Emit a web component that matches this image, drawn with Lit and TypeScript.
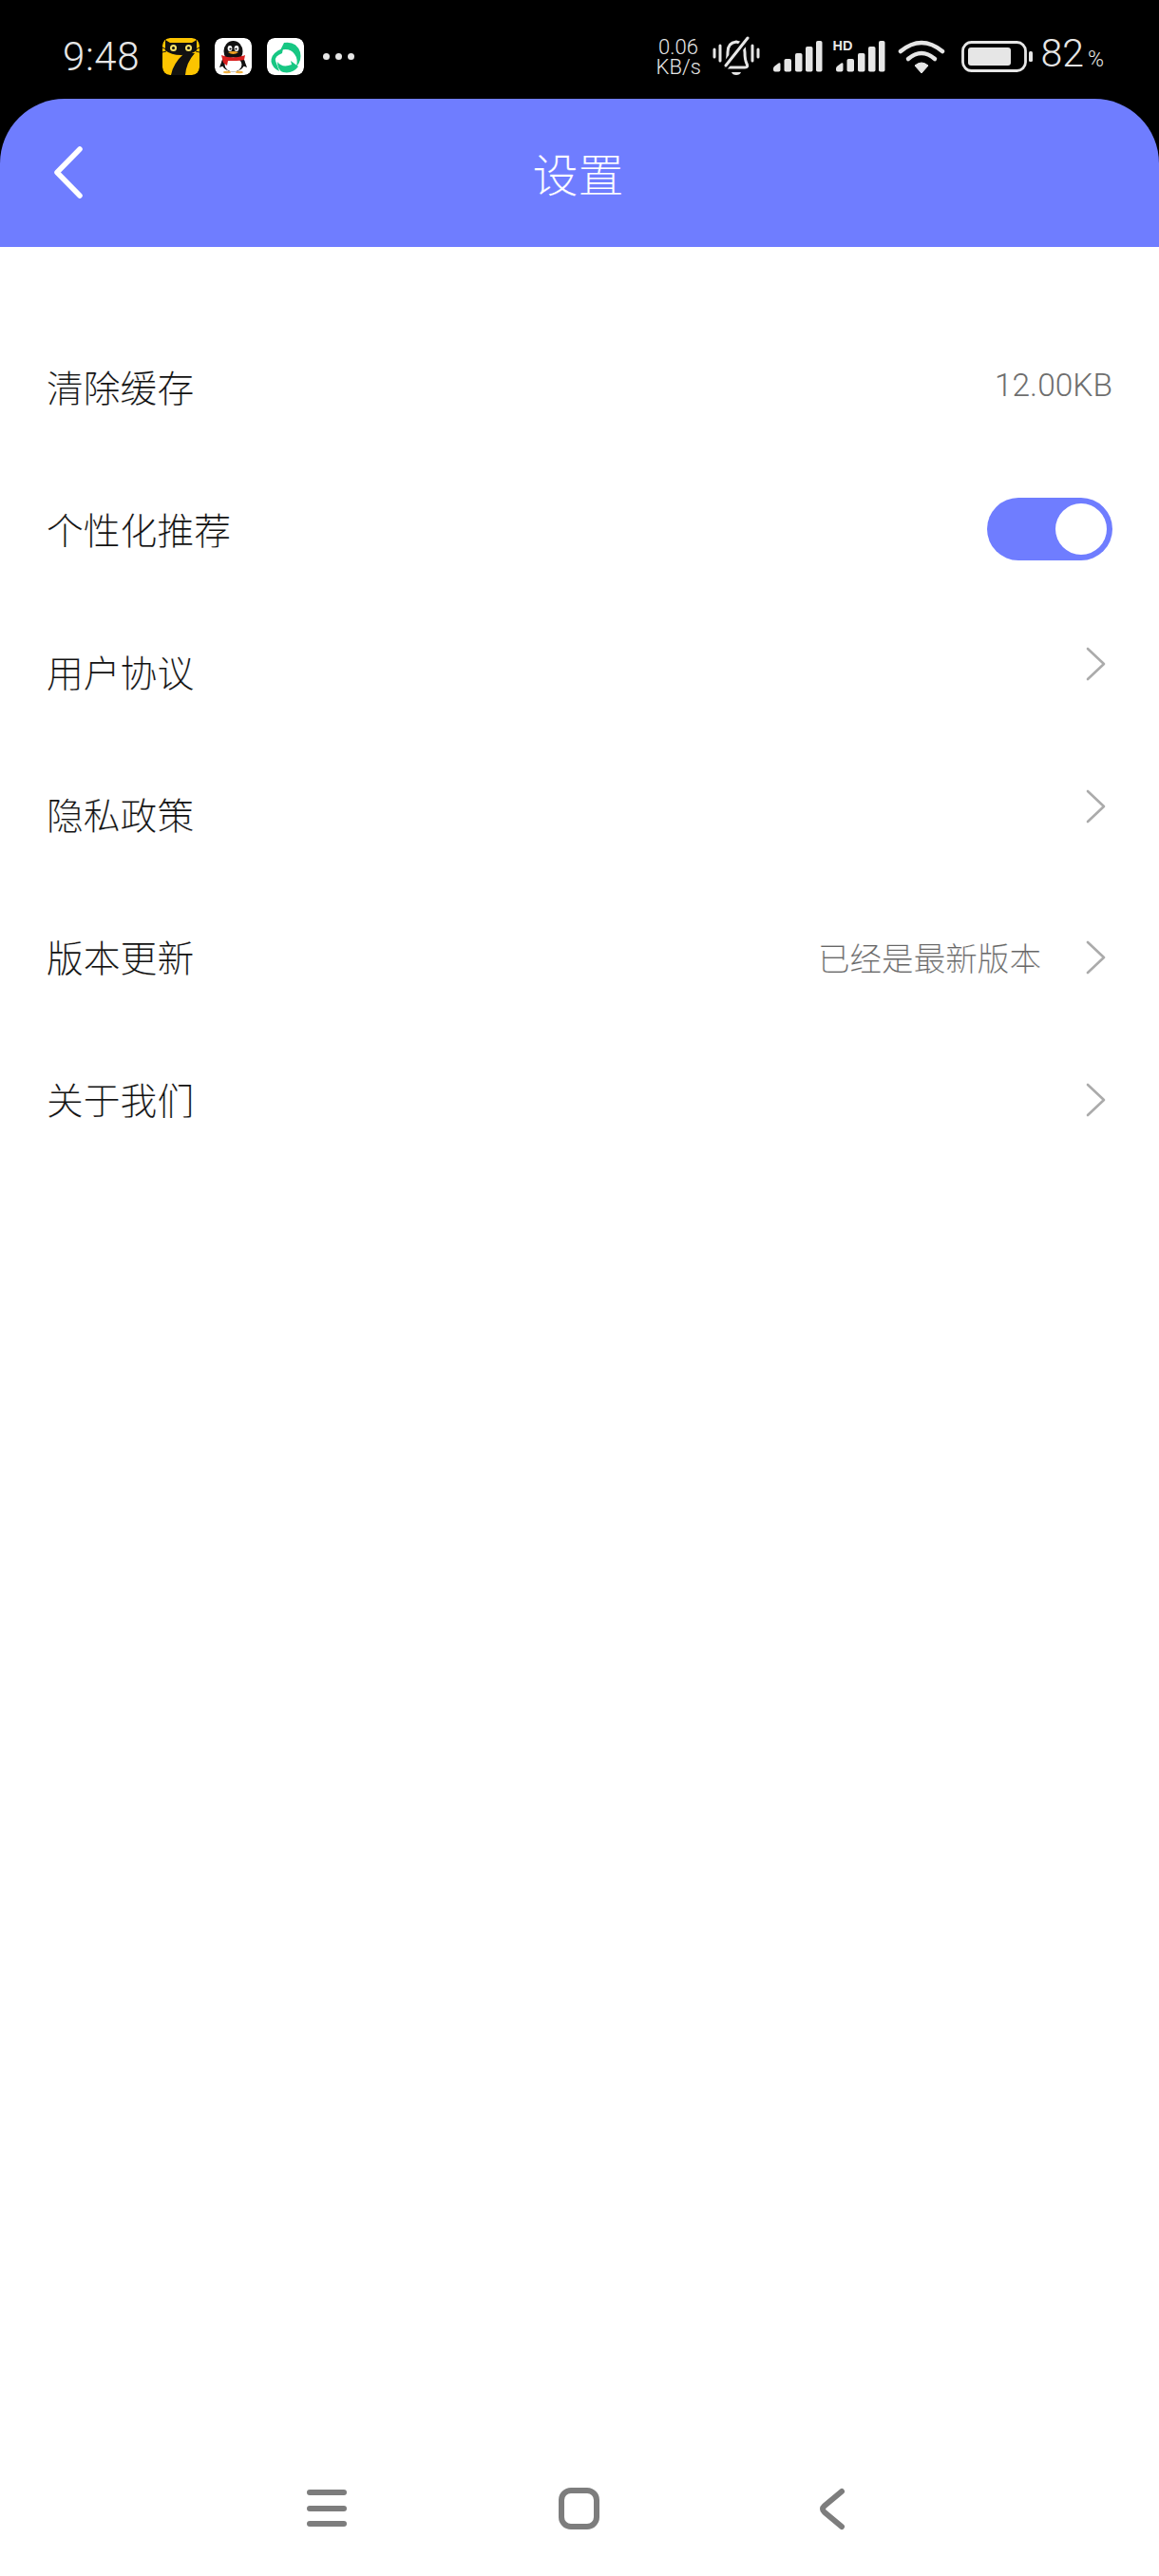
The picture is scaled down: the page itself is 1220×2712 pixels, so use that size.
import { LitElement, html, css, svg } from "lit";
import { customElement } from "lit/decorators.js";

const bars = svg`
  <path d="M0 29 Q0 27.500 1.500 26.500 L5.500 23.500 Q7.500 22.500 7.500 24.500 V30.500 Q7.500 32.500 5.500 32.500 H2 Q0 32.500 0 30.500Z"/>
  <rect x="11.500" y="19" width="7.500" height="13.500" rx="1.800"/>
  <rect x="23" y="13" width="7.500" height="19.500" rx="1.800"/>
  <rect x="34" y="6" width="7.500" height="26.500" rx="1.800"/>
  <rect x="45" y="0" width="6.500" height="32.500" rx="1.800"/>`;

const chevronPath = svg`<path d="M3 2 L20 18 L3 34" fill="none" stroke="#ababab" stroke-width="2.600" stroke-linecap="round" stroke-linejoin="round"/>`;

@customElement("app-root")
export class AppRoot extends LitElement {
  static styles = css`
    :host {
      display: flex;
      flex-direction: column;
      width: 1220px;
      height: 2712px;
      background: #fff;
      font-family: "Noto Sans CJK SC", "Noto Sans", sans-serif;
      overflow: hidden;
    }
    .status {
      height: 104px;
      background: #000;
      color: #e6e6e6;
      display: flex;
      align-items: center;
      padding: 15px 58px 0 66px;
      box-sizing: border-box;
      flex: none;
      font-family: Roboto, sans-serif;
      font-weight: 300;
    }
    .time { font-size: 42px; width: 105px; letter-spacing: 0.6px; line-height: 46px; }
    .app { width: 39px; height: 39px; border-radius: 8px; margin-right: 16px; display: block; }
    .dots { display: flex; gap: 6px; margin-left: 4px; }
    .dots i { width: 7px; height: 7px; border-radius: 50%; background: #e6e6e6; display: block; }
    .spacer { flex: 1; }
    .speed { font-size: 22px; line-height: 21px; text-align: center; width: 47px; }
    .ic { display: block; fill: #e6e6e6; }
    .bell { margin-left: 12px; }
    .sig { margin-left: 14px; }
    .sig2 { margin-left: 14px; position: relative; }
    .hd {
      position: absolute; left: -3px; top: -3px;
      font: 700 14.500px/16px "Liberation Sans", sans-serif;
      color: #e6e6e6;
    }
    .wifi { display: block; margin-left: 13px; }
    .batt { display: block; margin-left: 17px; }
    .pct { font-size: 41px; margin-left: 9px; line-height: 46px; display: flex; align-items: baseline; }
    .pct small { font-size: 23px; margin-left: 4px; }

    .bar {
      flex: none;
      height: 156px;
      background: #000;
    }
    .bar-in {
      height: 100%;
      background: #6f7dff;
      border-radius: 68px 68px 0 0;
      display: flex;
      align-items: center;
      justify-content: center;
      position: relative;
      color: #fff;
      font-size: 48px;
      font-weight: 300;
      padding: 0 3px 3px 0;
      box-sizing: border-box;
      -webkit-text-stroke: 0.2px #6f7dff;
    }
    .back { position: absolute; left: 55px; top: 50px; }
    .list { padding: 73px 0 0; flex: none; }
    .row {
      height: 150px;
      display: flex;
      align-items: center;
      padding: 0 49px;
      box-sizing: border-box;
      justify-content: space-between;
      color: #111;
      font-size: 38.800px;
      font-weight: 300;
    }
    .label { padding-bottom: 5px; -webkit-text-stroke: 0.15px #fff; }
    .right { display: flex; align-items: center; color: #666; font-size: 33.600px; font-weight: 300; }
    .right-text { -webkit-text-stroke: 0.2px #fff; padding-bottom: 2px; }
    .chev { display: block; margin-right: 5px; margin-left: 46px; }
    .only { margin-left: 0; }
    .up { margin-bottom: 19px; }
    .kb { font-family: Roboto, sans-serif; font-weight: 300; font-size: 33.500px; margin-top: -6px; color: #6e6e6e; }
    .toggle {
      width: 132px; height: 66px; border-radius: 33px; background: #6f7dff; margin-bottom: 3px;
      display: flex; justify-content: flex-end; align-items: center; padding: 0 6px; box-sizing: border-box;
    }
    .toggle i { width: 54px; height: 54px; border-radius: 50%; background: #fff; display: block; }
    .nav {
      margin-top: auto;
      height: 112px;
      display: flex;
      justify-content: center;
      align-items: flex-start;
      flex: none;
    }
  `;

  private row(label: string, right: unknown) {
    return html`<div class="row"><span class="label">${label}</span>${right}</div>`;
  }

  private chev(extra: string) {
    return html`<svg class="chev ${extra}" width="24" height="36" viewBox="0 0 24 36">${chevronPath}</svg>`;
  }

  render() {
    return html`
      <div class="status">
        <span class="time">9:48</span>
        <svg class="app" viewBox="0 0 39 39">
          <rect width="39" height="39" rx="8" fill="#fcc400"/>
          <path d="M3 2 L8 5 H31 L36 2 V13 Q30 18 19.500 18 Q9 18 3 13Z" fill="#111"/>
          <path d="M0 10 L4 12 M0 15 L4 14 M39 10 L35 12 M39 15 L35 14" stroke="#111" stroke-width="1"/>
          <circle cx="11.500" cy="10.500" r="3.500" fill="#f6e36a"/><circle cx="27.500" cy="10.500" r="3.500" fill="#f6e36a"/>
          <circle cx="11.500" cy="10.500" r="1.500" fill="#111"/><circle cx="27.500" cy="10.500" r="1.500" fill="#111"/>
          <path d="M9 39 Q11 27 23 16 H34 Q25 26 24 39Z" fill="#111"/>
        </svg>
        <svg class="app" viewBox="0 0 39 39">
          <rect width="39" height="39" rx="8" fill="#fff"/>
          <ellipse cx="19.500" cy="14" rx="10" ry="11" fill="#111"/>
          <ellipse cx="19.500" cy="26" rx="12" ry="9.500" fill="#111"/>
          <path d="M8 23 L5 31 L10 29Z M31 23 L34 31 L29 29Z" fill="#111"/>
          <ellipse cx="19.500" cy="28" rx="9" ry="7.500" fill="#fff"/>
          <ellipse cx="16" cy="11" rx="2.400" ry="3" fill="#fff"/><ellipse cx="23" cy="11" rx="2.400" ry="3" fill="#fff"/>
          <circle cx="16.500" cy="11.500" r="1.100" fill="#111"/><circle cx="22.500" cy="11.500" r="1.100" fill="#111"/>
          <path d="M14 15 Q19.500 13 25 15 Q19.500 19 14 15Z" fill="#f0a020"/>
          <path d="M7 18 Q19.500 23 32 18 L31 23 Q26 24 23 24 H14 L13 29 L9 26 Z" fill="#d9201f"/>
          <ellipse cx="13" cy="36" rx="4" ry="1.200" fill="#f0b040"/><ellipse cx="26" cy="36" rx="4" ry="1.200" fill="#f0b040"/>
        </svg>
        <svg class="app" viewBox="0 0 39 39">
          <rect width="39" height="39" rx="8" fill="#fff"/>
          <path d="M18 5 Q31 3 35 15 Q37 24 31 30 Q33 22 29 17 Q24 10 14 13Z" fill="#17c783"/>
          <path d="M12 13 Q4 18 4.500 25 Q6 32 13 35 L9 24 Q8 19 16 16 L17 11Z" fill="#17c783"/>
          <path d="M11 25 Q16 32 26 28 L25 24 L33 30 Q27 38 17 36 Q11 34 11 25Z" fill="#17c783"/>
        </svg>
        <span class="dots"><i></i><i></i><i></i></span>
        <span class="spacer"></span>
        <span class="speed">0.06<br />KB/s</span>
        <svg class="ic bell" width="50" height="44" viewBox="0 0 50 44">
          <path d="M2 14 V22 M8 10 V26 M42 10 V26 M48 14 V22" stroke="#e6e6e6" stroke-width="3" stroke-linecap="round" fill="none"/>
          <path d="M14 29 Q16 25 16 17 Q16 7 25 6 Q34 7 34 17 Q34 25 36 29 Q38 33 34 33 H16 Q12 33 14 29Z" stroke="#e6e6e6" stroke-width="3" fill="none"/>
          <path d="M20 38 H30 Q29 41 25 41 Q21 41 20 38Z"/>
          <path d="M12 33 L38 1" stroke="#000" stroke-width="8" fill="none"/>
          <path d="M14 31 L37 2" stroke="#e6e6e6" stroke-width="3" stroke-linecap="round" fill="none"/>
        </svg>
        <svg class="ic sig" width="52" height="33" viewBox="0 0 52 33">${bars}</svg>
        <span class="sig2">
          <svg class="ic" width="52" height="33" viewBox="0 0 52 33">${bars}</svg>
          <span class="hd">HD</span>
        </span>
        <svg class="wifi" width="50" height="36" viewBox="0 0 50 36">
          <g fill="none" stroke="#e6e6e6" stroke-width="4.500" stroke-linecap="round">
            <path d="M3 12 Q25 -6 47 12"/><path d="M11 20 Q25 8 39 20"/>
          </g>
          <path d="M18 27 Q25 21 32 27 L25 35Z" fill="#e6e6e6" stroke="#e6e6e6" stroke-linejoin="round"/>
        </svg>
        <svg class="batt" width="75" height="33" viewBox="0 0 75 33">
          <rect x="1.500" y="1.500" width="66" height="30" rx="9" fill="none" stroke="#e6e6e6" stroke-width="2.800"/>
          <rect x="7" y="7" width="45" height="19" rx="3" fill="#e6e6e6"/>
          <rect x="71" y="11" width="4" height="11" rx="1.500" fill="#e6e6e6"/>
        </svg>
        <span class="pct">82<small>%</small></span>
      </div>
      <div class="bar">
        <div class="bar-in">
          <svg class="back" width="34" height="56" viewBox="0 0 34 56"><path d="M29 3 L5 27.500 L29 52" fill="none" stroke="#fff" stroke-width="5.500" stroke-linecap="round" stroke-linejoin="round"/></svg>
          <span>设置</span>
        </div>
      </div>
      <div class="list">
        ${this.row("清除缓存", html`<span class="right kb">12.00KB</span>`)}
        ${this.row("个性化推荐", html`<span class="toggle"><i></i></span>`)}
        ${this.row("用户协议", html`<span class="right">${this.chev("only up")}</span>`)}
        ${this.row("隐私政策", html`<span class="right">${this.chev("only up")}</span>`)}
        ${this.row("版本更新", html`<span class="right"><span class="right-text">已经是最新版本</span>${this.chev("")}</span>`)}
        ${this.row("关于我们", html`<span class="right">${this.chev("only")}</span>`)}
      </div>
      <div class="nav">
        <svg width="620" height="112" viewBox="0 0 620 112">
          <g fill="none" stroke="#7d7d7d" stroke-width="6" stroke-linecap="round" stroke-linejoin="round">
            <path d="M26 24 H62 M26 41 H62 M26 57 H62"/>
            <rect x="291" y="22" width="37" height="38" rx="10"/>
            <path d="M586 23 L568 38 Q564 41.500 568 45 L586 60"/>
          </g>
        </svg>
      </div>
    `;
  }
}
